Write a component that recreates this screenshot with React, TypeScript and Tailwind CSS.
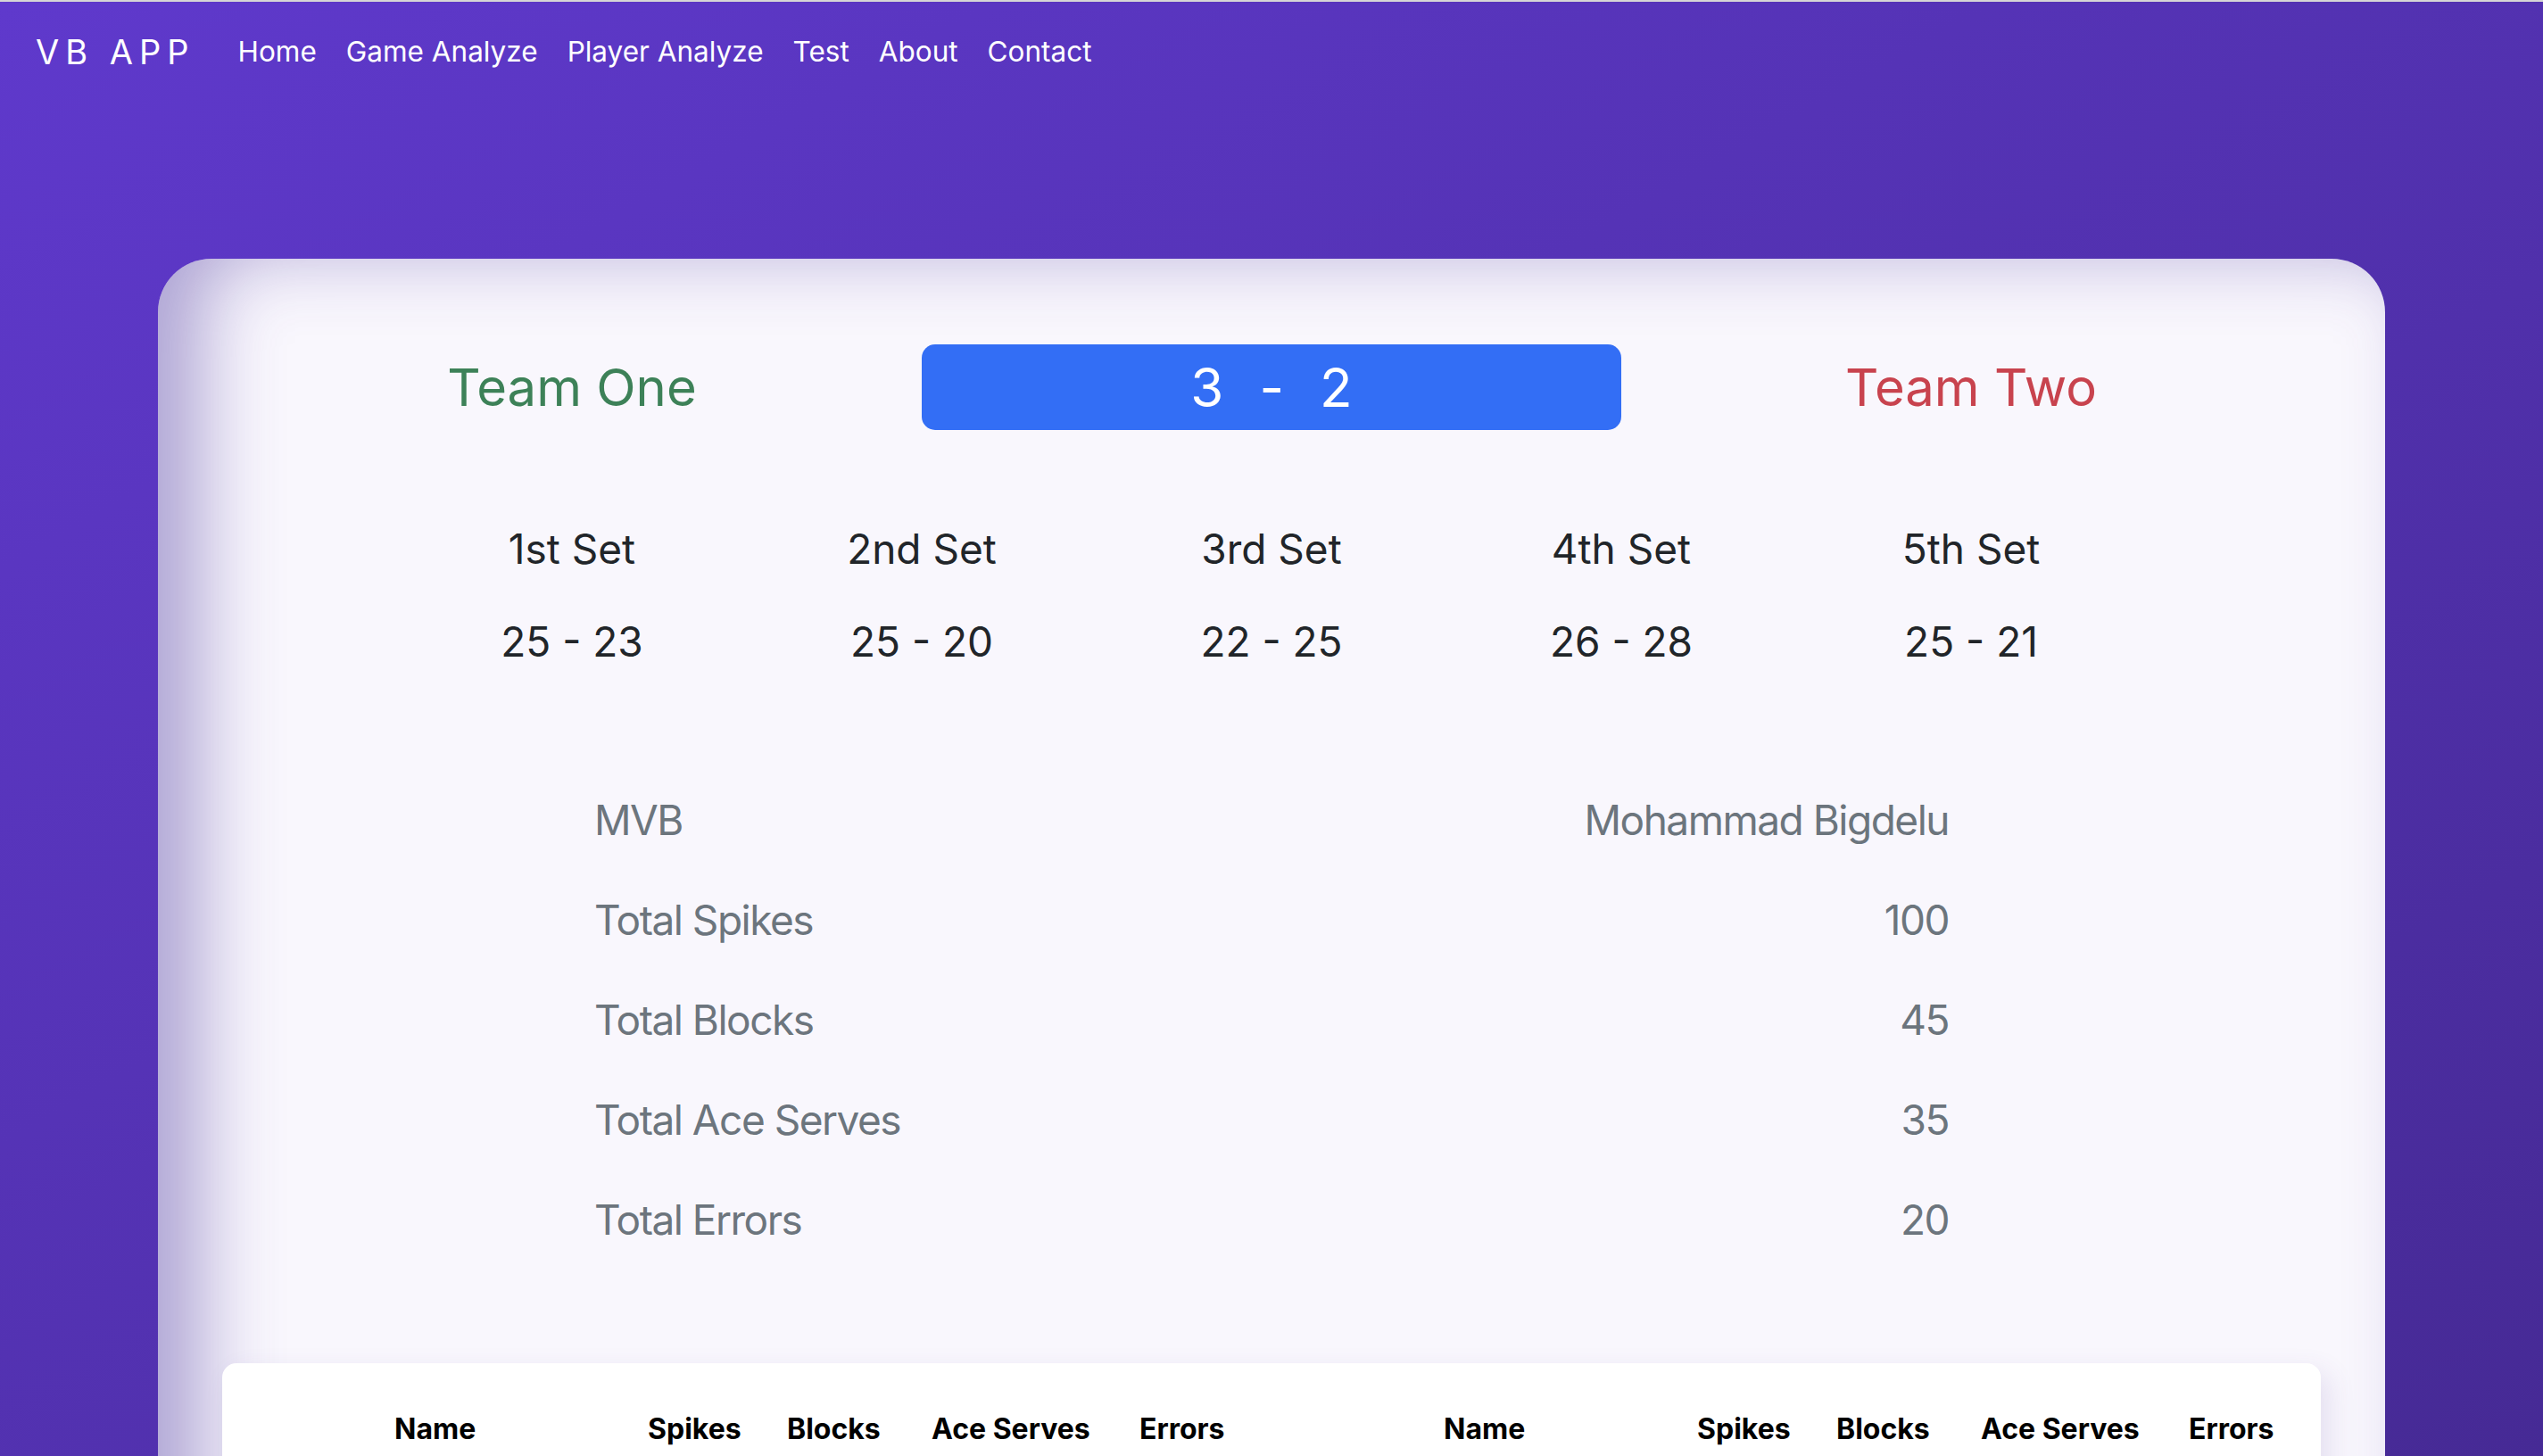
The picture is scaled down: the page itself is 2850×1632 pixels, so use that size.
import * as React from 'react'

const navLinks = ['Home', 'Game Analyze', 'Player Analyze', 'Test', 'About', 'Contact']

const sets = [
  { title: '1st Set', score: '25 - 23' },
  { title: '2nd Set', score: '25 - 20' },
  { title: '3rd Set', score: '22 - 25' },
  { title: '4th Set', score: '26 - 28' },
  { title: '5th Set', score: '25 - 21' },
]

const stats = [
  ['MVB', 'Mohammad Bigdelu'],
  ['Total Spikes', '100'],
  ['Total Blocks', '45'],
  ['Total Ace Serves', '35'],
  ['Total Errors', '20'],
]

function TableHead() {
  return (
    <div className="flex pl-[193px] pt-[51px] text-[32px] font-bold leading-[45px] text-black">
      <div className="w-[284px]">Name</div>
      <div className="w-[156px]">Spikes</div>
      <div className="w-[162px]">Blocks</div>
      <div className="w-[233px]">Ace Serves</div>
      <div>Errors</div>
    </div>
  )
}

export default function App() {
  return (
    <div className="h-[1632px] overflow-hidden border-t-2 border-[#d6d6d6] bg-gradient-to-br from-[#5f39cc] to-[#462a95] [font-family:Inter,sans-serif]">
      <nav className="flex h-[112px] items-center px-[40px] text-white">
        <span className="mr-[48px] text-[38px] tracking-[7px]">VB APP</span>
        <div className="flex gap-[33px] text-[31.5px]">
          {navLinks.map((link) => (
            <a key={link} href="#" className="text-white">
              {link}
            </a>
          ))}
        </div>
      </nav>

      <main className="mx-auto mt-[176px] h-[1600px] w-[2496px] rounded-[60px] bg-[#f9f7fd] px-[72px] pt-[96px] shadow-[inset_48px_-12px_88px_rgba(80,60,160,0.45)]">
        <div className="grid h-[96px] grid-cols-3 items-center text-[58px]">
          <div className="text-center text-[#3d8158]">Team One</div>
          <div className="flex h-full items-center justify-center gap-[40px] rounded-[15px] bg-[#336ef5] text-[60px] text-white">
            <span>3</span>
            <span>-</span>
            <span>2</span>
          </div>
          <div className="text-center text-[#c8434e]">Team Two</div>
        </div>

        <div className="mt-[99px] flex justify-center text-[46px] leading-[69px] text-[#212529]">
          {sets.map((set) => (
            <div key={set.title} className="w-[392px] text-center">
              <div>{set.title}</div>
              <div className="mt-[35px]">{set.score}</div>
            </div>
          ))}
        </div>

        <div className="mx-auto mt-[109px] w-[1518px] text-[46px] tracking-[-1.5px] text-[#6c757d]">
          {stats.map(([label, value]) => (
            <div key={label} className="flex h-[112px] items-center justify-between">
              <span>{label}</span>
              <span>{value}</span>
            </div>
          ))}
        </div>

        <div className="mt-[105px] grid h-[400px] grid-cols-2 rounded-[16px] bg-white shadow-[10px_10px_30px_rgba(80,60,150,0.12)]">
          <TableHead />
          <TableHead />
        </div>
      </main>
    </div>
  )
}
